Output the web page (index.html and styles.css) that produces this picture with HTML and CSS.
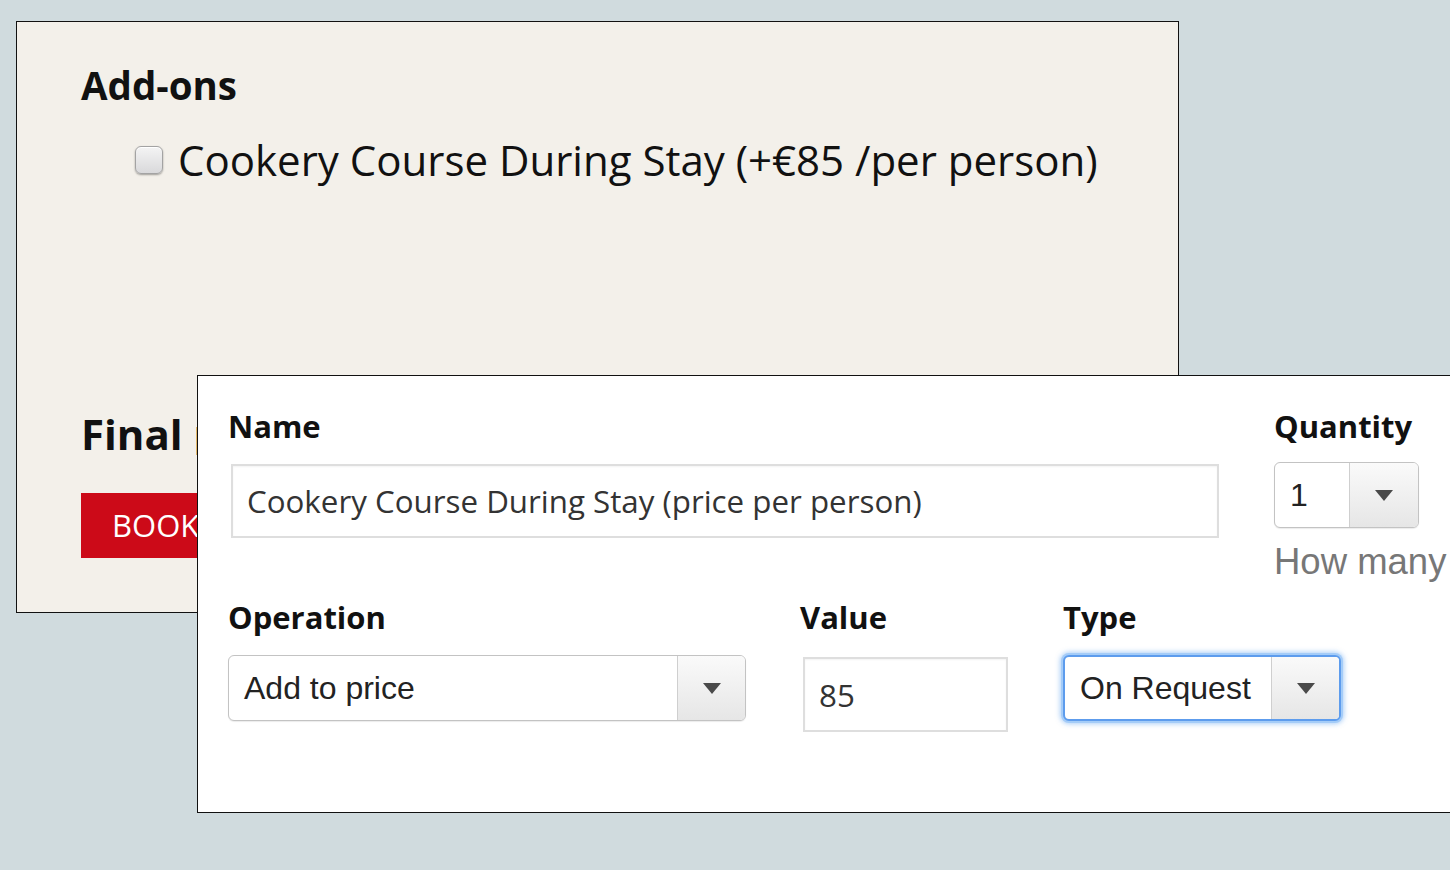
FILE: index.html
```html
<!DOCTYPE html>
<html lang="en">
<head>
<meta charset="utf-8">
<title>Add-ons</title>
<link rel="stylesheet" href="styles.css">
</head>
<body>
<div class="canvas">
  <section class="win booking">
    <h2 class="addons-title">Add-ons</h2>
    <label class="addon">
      <span class="checkbox"></span>
      <span class="addon-text">Cookery Course During Stay (+€85 /per person)</span>
    </label>
    <h2 class="final-title">Final price</h2>
    <div class="book-btn"><span class="book-label">BOOK NOW</span></div>
  </section>

  <section class="win editor">
    <div class="row row-top">
      <div class="field field-name">
        <div class="label">Name</div>
        <div class="text-input name-input">Cookery Course During Stay (price per person)</div>
      </div>
      <div class="field field-qty">
        <div class="label">Quantity</div>
        <div class="select qty-select">
          <span class="select-value">1</span>
          <span class="select-arrow"><svg width="18" height="11" viewBox="0 0 18 11"><path d="M0 0H18L9 11Z" fill="#4a4a4a"/></svg></span>
        </div>
        <div class="help">How many</div>
      </div>
    </div>
    <div class="row row-bottom">
      <div class="field field-op">
        <div class="label">Operation</div>
        <div class="select op-select">
          <span class="select-value">Add to price</span>
          <span class="select-arrow"><svg width="18" height="11" viewBox="0 0 18 11"><path d="M0 0H18L9 11Z" fill="#4a4a4a"/></svg></span>
        </div>
      </div>
      <div class="field field-value">
        <div class="label">Value</div>
        <div class="text-input value-input">85</div>
      </div>
      <div class="field field-type">
        <div class="label">Type</div>
        <div class="select type-select focused">
          <span class="select-value">On Request</span>
          <span class="select-arrow"><svg width="18" height="11" viewBox="0 0 18 11"><path d="M0 0H18L9 11Z" fill="#4a4a4a"/></svg></span>
        </div>
      </div>
    </div>
  </section>
</div>
</body>
</html>
```

FILE: styles.css
```css
* { box-sizing: border-box; }

html, body {
  margin: 0;
  padding: 0;
  width: 1450px;
  height: 870px;
  overflow: hidden;
  background: #d0dbde;
}

.canvas {
  position: relative;
  width: 1450px;
  height: 870px;
}

.win {
  position: absolute;
  border: 1px solid #111;
}

/* ---------- booking window ---------- */
.booking {
  left: 16px;
  top: 21px;
  width: 1163px;
  height: 592px;
  background: #f3f0ea;
  padding: 44px 0 0 64px;
  font-family: "Open Sans", "Liberation Sans", sans-serif;
  color: #111;
}

.addons-title {
  margin: 0;
  font-size: 38.5px;
  line-height: 38px;
  font-weight: 700;
}

.addon {
  display: flex;
  align-items: center;
  margin: 36px 0 0 54px;
  height: 40px;
}

.checkbox {
  width: 28px;
  height: 28px;
  border: 1px solid #a3a3a3;
  border-radius: 6px;
  background: linear-gradient(#f4f4f4, #d9d9db);
  box-shadow: 0 1px 2px rgba(0,0,0,0.35), inset 0 1px 0 #fff;
  margin-right: 15px;
  flex: none;
}

.addon-text {
  font-size: 42px;
  line-height: 40px;
  color: #111;
  white-space: nowrap;
}

/* the editor window covers the right part of these two; clip at its edge */
.final-title {
  margin: 233px 0 0 0;
  width: 116px;
  overflow: hidden;
  white-space: nowrap;
  font-size: 42px;
  line-height: 42px;
  font-weight: 700;
}

.book-btn {
  margin-top: 38px;
  width: 116px;
  height: 65px;
  overflow: hidden;
  background: #cc0a18;
  color: #fff;
  font-size: 31px;
  line-height: 65px;
  padding-left: 31px;
  white-space: nowrap;
}

/* ---------- editor window ---------- */
.editor {
  left: 197px;
  top: 375px;
  width: 1300px;
  height: 438px;
  background: #fff;
  padding: 30px 0 0 30px;
}

.row {
  display: flex;
  align-items: flex-start;
}

.row-bottom { margin-top: 15px; }

.label {
  font-family: "Open Sans", "Liberation Sans", sans-serif;
  font-weight: 700;
  font-size: 31px;
  line-height: 40px;
  color: #111;
}

.field-name { width: 991px; }
.field-qty { margin-left: 55px; }
.field-op { width: 519px; }
.field-value { margin-left: 53px; }
.field-type { margin-left: 55px; }

.text-input {
  border: 2px solid #dedede;
  box-shadow: inset 0 1px 2px rgba(0,0,0,0.05);
  background: #fff;
  font-family: "Open Sans", "Liberation Sans", sans-serif;
  font-size: 31.3px;
  color: #333;
  display: flex;
  align-items: center;
  padding-left: 14px;
}

.name-input {
  margin: 18px 0 0 3px;
  width: 988px;
  height: 74px;
}

.value-input {
  margin: 20px 0 0 3px;
  width: 205px;
  height: 75px;
}

.select {
  display: flex;
  height: 66px;
  border: 1px solid #c3c3c3;
  border-radius: 6px;
  background: #fff;
  overflow: hidden;
  font-family: "Liberation Sans", Arial, sans-serif;
  font-size: 32px;
  color: #222;
  box-shadow: 0 1px 1px rgba(0,0,0,0.08);
}

.select-value {
  flex: 1;
  display: flex;
  align-items: center;
  padding-left: 15px;
}

.select-arrow {
  flex: none;
  width: 68px;
  display: flex;
  align-items: center;
  justify-content: center;
  border-left: 1px solid #cfcfcf;
  background: linear-gradient(#fafafa, #e6e6e6);
}

.qty-select {
  margin-top: 16px;
  width: 145px;
}
.qty-select .select-arrow { width: 69px; }

.op-select {
  margin-top: 18px;
  width: 518px;
}

.type-select {
  margin-top: 18px;
  width: 278px;
}

.focused {
  border: 2px solid #5d9ced;
  box-shadow: 0 0 0 2px #a4ccf8, 0 0 5px 3px rgba(90,160,240,0.5);
}

.help {
  margin-top: 14px;
  font-family: "Liberation Sans", Arial, sans-serif;
  font-size: 36.5px;
  line-height: 40px;
  color: #777;
  white-space: nowrap;
}
```
